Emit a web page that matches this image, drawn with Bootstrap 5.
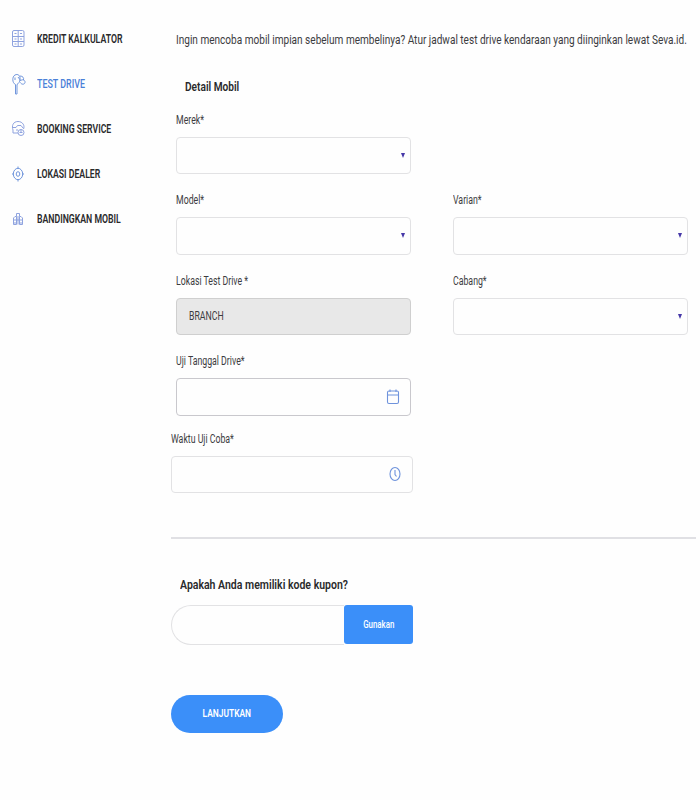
<!DOCTYPE html>
<html lang="id">
<head>
<meta charset="utf-8">
<meta name="viewport" content="width=device-width, initial-scale=1">
<title>Test Drive</title>
<link href="https://cdn.jsdelivr.net/npm/bootstrap@5.3.0/dist/css/bootstrap.min.css" rel="stylesheet">
<style>
body{font-family:Roboto,"Liberation Sans",sans-serif;font-size:13px;line-height:20px;color:#3c3c3f;background:#fefefe;overflow:hidden;width:700px;height:800px}
.side{width:171px;padding:16.5px 0 0 9px}
.side a{height:44.9px;color:#29292b;font-weight:600;font-size:13px;--s:.67}
.side a.active{color:#4a80d8;font-weight:500;--s:.685}
.side svg{width:18px;height:24px;margin-right:10px;fill:none;stroke:#8fa3df;stroke-width:1}
.side svg.blue{stroke:#7196dc}
.main{width:529px;padding-top:29.6px;overflow:hidden}
.tx{display:inline-block;white-space:nowrap;transform-origin:0 50%;transform:scaleX(var(--s,.7))}
.intro{--s:.773;margin-right:-150px}
.inner{padding-left:5.4px}
.pair{display:grid;grid-template-columns:235px 235px;column-gap:42px}
.field{margin-bottom:16px}
.field .form-label{display:block;height:20px;margin:0 0 7px;font-size:12.5px}
.box{height:37.5px;border:1px solid #e2e2e4;border-radius:4px;background:#fefefe;color:#3c3c3f;font-size:12.5px}
.box.off{background:#e8e8e8;border-color:#cfcfcf;padding-left:12px}
.box.date{border-color:#c9c8cd}
.wide{width:242px;margin-top:-3px}
.tri{border:2.5px solid transparent;border-top:5.5px solid #4638a8;border-bottom:0;margin-right:5px}
.box svg{fill:none;stroke:#6f93dc;stroke-width:1.1}
.head{font-size:13.5px;font-weight:600;color:#29292b;padding-left:9px}
.detail{margin:26px 0 14px;--s:.75}
.coupon{margin:35px 0 10.5px;--s:.778}
.rule{border-top:2px solid #e0e0e4;margin-top:44px;width:525px}
.code{width:173px;height:40px;border:1px solid #e2e2e4;border-right:0;border-radius:20px 0 0 20px}
.use{width:69px;height:39px;background:#3b8ff9;color:#fff;border-radius:3px;font-size:10px;font-weight:500;--s:.79}
.next{width:112px;height:38px;background:#3b8ff9;color:#fff;font-size:10px;font-weight:600;margin-top:50px;--s:.84}
.mid{transform-origin:50% 50%}
</style>
</head>
<body>
<div class="d-flex">
<nav class="side flex-shrink-0 nav flex-column flex-nowrap">
<a class="d-flex align-items-center text-decoration-none" href="#"><svg viewBox="0 0 18 24"><rect x="3.5" y="3.5" width="11.5" height="16" rx="1.5"/><path d="M3.5 9.500H15M3.500 14.500H15M9.200 3.500V19.500M5.500 6.500H7.500M11 6.500H13M5.500 12H7.500M11 12H13M5.500 17H7.500M11 17H13"/></svg><span class="tx">KREDIT KALKULATOR</span></a>
<a class="d-flex align-items-center text-decoration-none active" href="#"><svg class="blue" viewBox="0 0 18 24"><path d="M6.500 22V12.500C3 11 3 4.500 6 3C9 1.500 11.500 3.500 11 7.500C10.800 10 9.500 11.500 8 12.500V22ZM6 5.500V8"/><path d="M11 4C14 4 15 6 14.500 8M12 8.500C13 7 16.500 8 16 10.500C15.500 13 12 12.500 11.500 10.500M9 5L12 9"/></svg><span class="tx">TEST DRIVE</span></a>
<a class="d-flex align-items-center text-decoration-none" href="#"><svg viewBox="0 0 18 24"><path d="M4 13C2.500 9 4 4.500 9 4.500S16 9 14.500 12M4 10.500H7L8.500 8.500H12L14 11M4 13V16H9M7 13H9"/><circle cx="12" cy="15.500" r="3"/><path d="M10.500 15.500H13.500M12 12.500V15"/></svg><span class="tx">BOOKING SERVICE</span></a>
<a class="d-flex align-items-center text-decoration-none" href="#"><svg class="blue" viewBox="0 0 18 24"><ellipse cx="9" cy="12" rx="4.700" ry="5.700"/><ellipse cx="9" cy="12" rx="1.800" ry="2.300"/><path d="M9 4.500V6.500M9 17.500V19.500M3 12H4.500M13.500 12H15"/></svg><span class="tx">LOKASI DEALER</span></a>
<a class="d-flex align-items-center text-decoration-none" href="#"><svg viewBox="0 0 18 24"><path d="M4.500 17.500V11L6 9.500H7.500V17.500ZM10.500 17.500V9.500H12L13.500 11V17.500ZM7.500 9.500V6.500H10.500V9.500M4.500 13H13.500M6 15V17M12 15V17M9 9V17.500"/></svg><span class="tx">BANDINGKAN MOBIL</span></a>
</nav>
<main class="main">
<div class="inner">
<div><span class="tx intro">Ingin mencoba mobil impian sebelum membelinya? Atur jadwal test drive kendaraan yang diinginkan lewat Seva.id.</span></div>
<div class="head detail"><span class="tx">Detail Mobil</span></div>
<div class="pair">
<div class="field"><label class="form-label"><span class="tx">Merek*</span></label><div class="box d-flex align-items-center justify-content-end"><i class="tri"></i></div></div><div></div>
<div class="field"><label class="form-label"><span class="tx">Model*</span></label><div class="box d-flex align-items-center justify-content-end"><i class="tri"></i></div></div>
<div class="field"><label class="form-label"><span class="tx">Varian*</span></label><div class="box d-flex align-items-center justify-content-end"><i class="tri"></i></div></div>
<div class="field"><label class="form-label"><span class="tx">Lokasi Test Drive *</span></label><div class="box off d-flex align-items-center"><span class="tx">BRANCH</span></div></div>
<div class="field"><label class="form-label"><span class="tx">Cabang*</span></label><div class="box d-flex align-items-center justify-content-end"><i class="tri"></i></div></div>
<div class="field"><label class="form-label"><span class="tx">Uji Tanggal Drive*</span></label><div class="box date d-flex align-items-center justify-content-end pe-2"><svg width="18" height="18"><rect x="3.500" y="3" width="11" height="12.500" rx="1.500"/><path d="M3.500 7H14.500M6 1.500V4M12 1.500V4"/></svg></div></div>
</div>
</div>
<div class="field wide"><label class="form-label"><span class="tx">Waktu Uji Coba*</span></label><div class="box d-flex align-items-center justify-content-end pe-2"><svg width="18" height="18"><ellipse cx="9" cy="9" rx="5" ry="6.500"/><path d="M9 5V9.500L10.500 11.500"/></svg></div></div>
<div class="rule"></div>
<div class="head coupon"><span class="tx">Apakah Anda memiliki kode kupon?</span></div>
<div class="d-flex align-items-center"><div class="code"></div><div class="use d-flex align-items-center justify-content-center"><span class="tx mid">Gunakan</span></div></div>
<div class="next rounded-pill d-flex align-items-center justify-content-center"><span class="tx mid">LANJUTKAN</span></div>
</main>
</div>
</body>
</html>
